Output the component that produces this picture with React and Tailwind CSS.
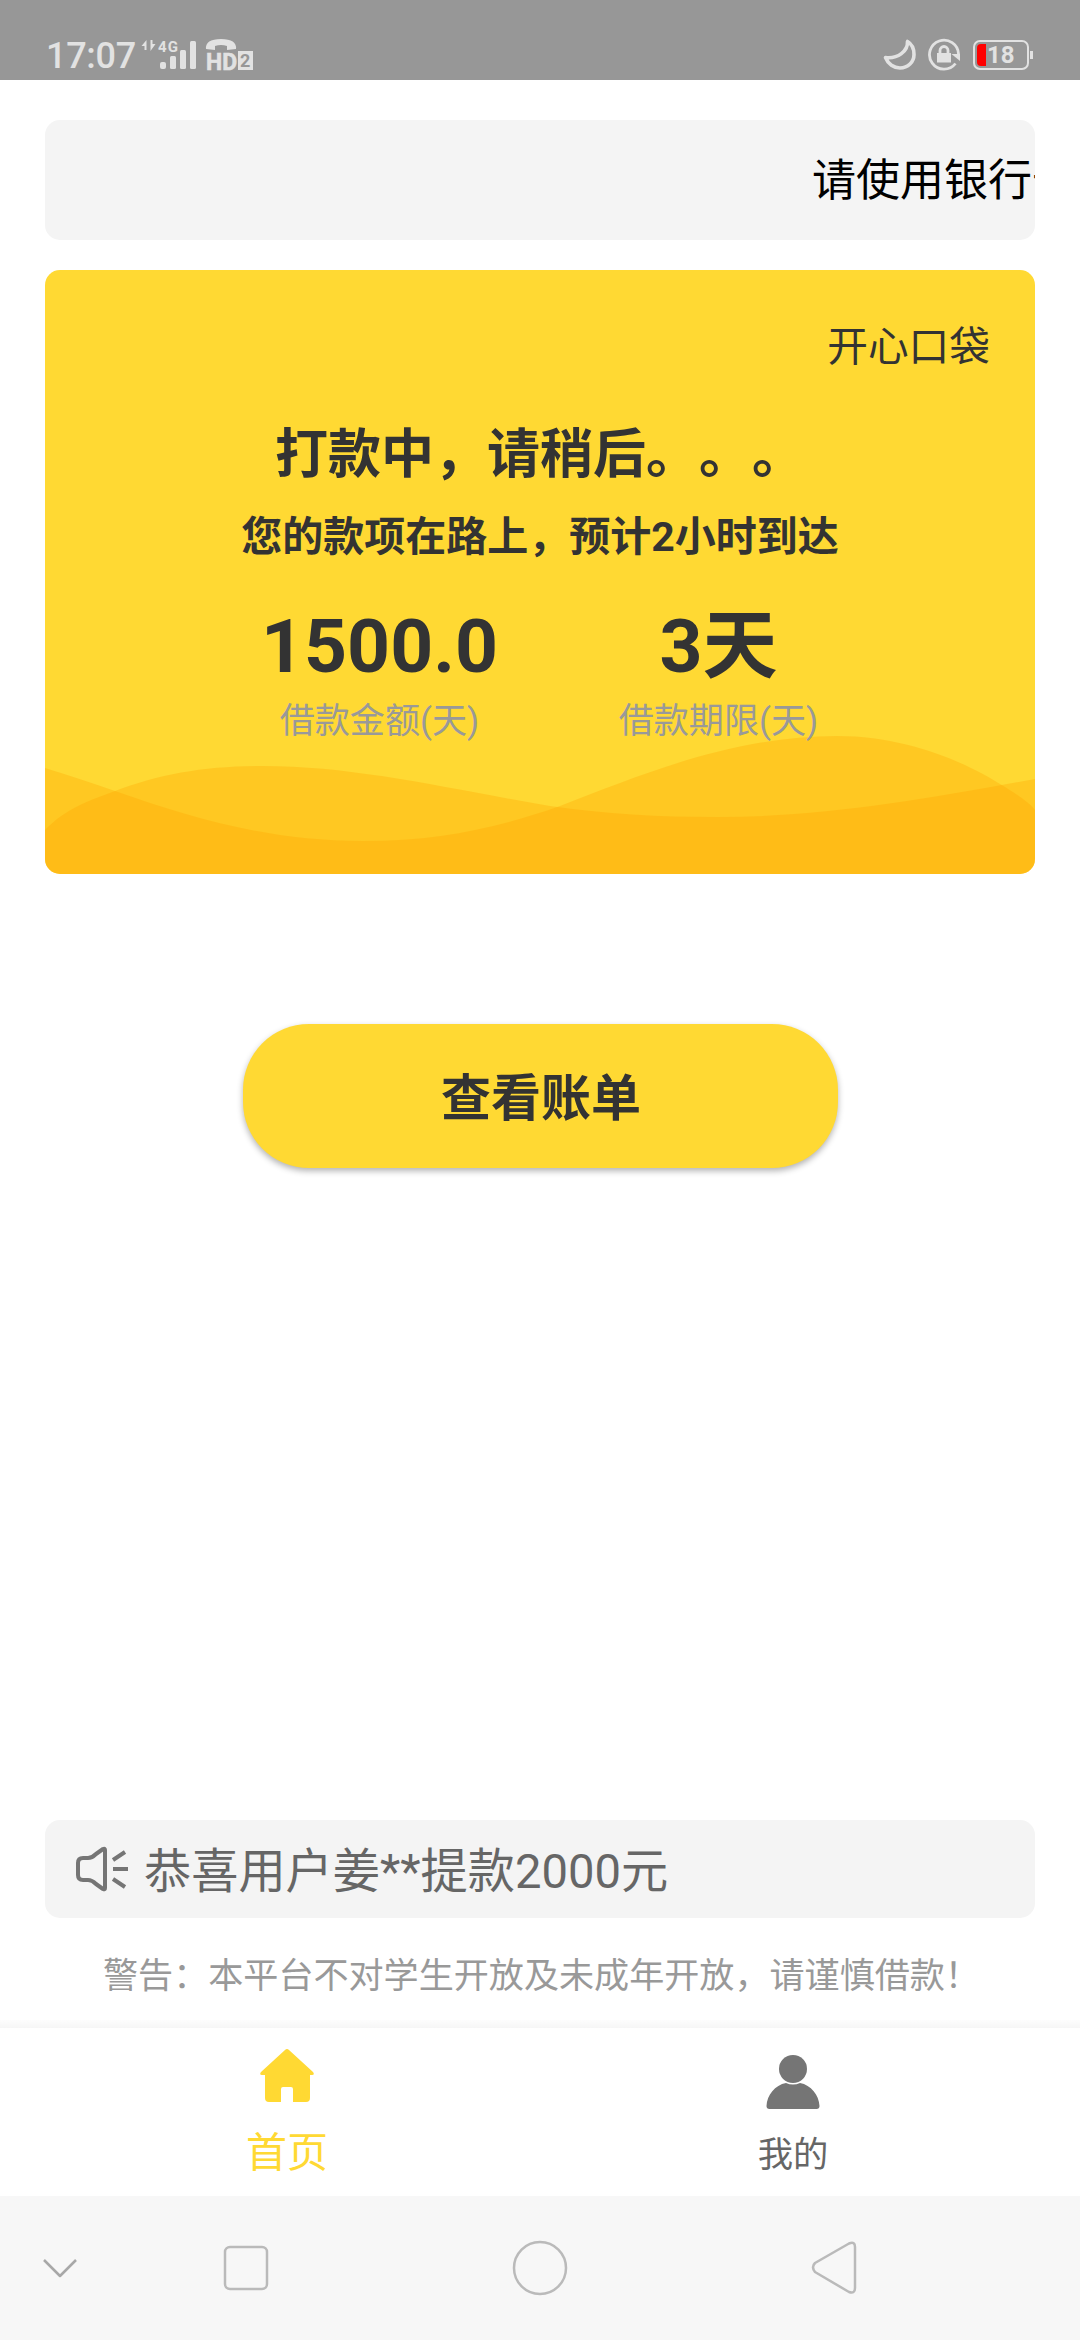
import { useState } from 'react';
import clsx from 'clsx';

const loanStats = [
  { label: '借款金额(天)', value: '1500.0' },
  { label: '借款期限(天)', value: '3天' },
];

const SignalIcons = () => (
  <svg className="overflow-visible" width="116" height="34" viewBox="140 37 116 34" fill="#e2e2e2" fontFamily="Roboto" fontWeight="700">
    {/* data arrows */}
    <path d="M141.5 46l5-6v10h-2v-4zM155.500 44l-5 7v-11h2v4z" />
    <text x="158" y="52" fontSize="15" textLength="20">4G</text>
    <rect x="160" y="62" width="6" height="7" rx="2" />
    <rect x="170" y="56" width="6" height="13" rx="1.5" />
    <rect x="180" y="50" width="6" height="19" rx="1.5" />
    <rect x="190" y="41" width="6" height="28" rx="1.5" />
    {/* handset */}
    <path d="M206 49q-1-10 15-10t15 10l-9 1v-4q-6-2-12 0v4z" />
    <text x="206" y="69.5" fontSize="24" textLength="31" lengthAdjust="spacingAndGlyphs" stroke="#e2e2e2" strokeWidth="0.6">HD</text>
    <rect x="238" y="51" width="15" height="19" />
    <text x="240" y="67" fontSize="18" fill="#979797">2</text>
  </svg>
);

const MoonIcon = () => (
  <svg width="34" height="34" viewBox="882 38 34 34" fill="none" stroke="#e2e2e2" strokeWidth="3.6" strokeLinejoin="round">
    <path d="M906.5 41.5C907 51 897 59 884.5 57.500C887 64 893 68 899 68C907 68 913 62 913 54.500C913 49 911 44 906.500 41.500z" />
  </svg>
);

const RotationLockIcon = () => (
  <svg width="34" height="34" viewBox="926 38 34 34" fill="none" stroke="#e2e2e2" strokeWidth="2.8">
    <path d="M954.500 63.500A14.500 14.500 0 1 1 957.500 54" />
    <path d="M950.500 54h8.500v7z" fill="#e2e2e2" stroke="none" />
    <rect x="936" y="53" width="14" height="9.500" fill="#e2e2e2" stroke="none" />
    <path d="M939 54v-3.500a4 4 0 0 1 8 0V54" />
  </svg>
);

const StatusBar = () => (
  <header className="flex h-20 items-start justify-between bg-[#979797] pr-[47px] pl-[46px] pt-[37px] text-[#e2e2e2]">
    <div className="flex">
      <span className="-mt-px w-[94px] text-[36px] leading-[40px] font-medium tracking-[-0.3px]">17:07</span>
      <SignalIcons />
    </div>
    <div className="flex pt-px">
      <MoonIcon />
      <div className="ml-2.5">
        <RotationLockIcon />
      </div>
      <div className="ml-3 mt-0.5 flex h-[30px] items-center">
        <div className="flex h-[30px] w-[56px] items-center rounded-[7px] border-2 border-[#e2e2e2] pl-0.5">
          <div className="h-[22px] w-[9px] rounded-l-[4px] bg-[#ff0000]" />
          <span className="ml-px text-[24px] leading-[24px] font-bold">18</span>
        </div>
        <div className="ml-px h-2 w-[3px] bg-[#e2e2e2]" />
      </div>
    </div>
  </header>
);

const CardWaves = () => (
  <svg className="absolute bottom-0 left-0" width="990" height="141" viewBox="0 0 990 141">
    <g fill="#ffa400" fillOpacity="0.32">
      <path d="M0 97C20 76 45 67 70 58C115 41 160 33 218 33C310 33 400 55 505 73C560 81 615 84 672 84C780 84 880 66 990 46V141H0z" />
      <path d="M0 35C25 43 48 50 70 58C150 86 225 108 318 108C395 108 455 94 515 73C600 40 690 3 792 3C865 3 925 32 955 51C970 60 985 70 990 77V141H0z" />
    </g>
  </svg>
);

const LoanCard = () => (
  <section className="relative mt-[30px] h-[604px] overflow-hidden rounded-[15px] bg-[#ffd933] text-[#333]">
    <CardWaves />
    <div className="relative flex flex-col items-center">
      <p className="mt-[47px] mr-[45px] self-end text-[40.7px] leading-[60px]">开心口袋</p>
      <h1 className="mt-[43px] text-[53px] leading-[70px] font-bold [text-spacing-trim:space-all]">打款中，请稍后。。。</h1>
      <p className="mt-[17px] text-[41px] leading-[60px] font-bold">您的款项在路上，预计2小时到达</p>
      <div className="mt-[34px] ml-[18px] flex gap-[105px]">
        {loanStats.map((stat) => (
          <div key={stat.label} className="flex w-[234px] flex-col items-center">
            <span className="text-[75px] leading-[90px] font-bold">{stat.value}</span>
            <span className="mt-1 text-[35.1px] leading-[52px] text-[#999]">{stat.label}</span>
          </div>
        ))}
      </div>
    </div>
  </section>
);

const SpeakerIcon = () => (
  <svg width="54" height="48" viewBox="75 1846 54 48" fill="none" stroke="#757575" strokeWidth="4" strokeLinejoin="round">
    <path d="M78 1864q0-5 5-5h5q4 0 8-4l7-5q2-1 2 1v38q0 2-2 1l-7-5q-4-4-8-4h-5q-5 0-5-5z" />
    <path d="M113 1861l12-8M113 1870h15M113 1880l12 8" />
  </svg>
);

const HomeIcon = () => (
  <svg width="54" height="54" viewBox="0 0 54 54" fill="#ffd933">
    <path d="M25 1q2-2 4 0l24 22q2 3-1 3h-2v23q0 4-4 4H33V40q0-2-2-2h-8q-2 0-2 2v13H9q-4 0-4-4V26H2q-3 0-1-3z" />
  </svg>
);

const PersonIcon = () => (
  <svg width="54" height="54" viewBox="0 0 54 54" fill="#757575">
    <ellipse cx="27" cy="14" rx="14" ry="14" />
    <path d="M20 28q7 3 14 0C45 30 53 40 53.500 51q0 3-3 3h-47q-3 0-3-3C1 40 9 30 20 28z" />
  </svg>
);

const tabs = [
  { id: 'home', label: '首页', icon: HomeIcon },
  { id: 'mine', label: '我的', icon: PersonIcon },
];

const TabBar = () => {
  const [active, setActive] = useState('home');

  return (
    <>
      <div className="h-[8px] bg-linear-to-b from-[#fdfdfd] to-[#f6f6f6]" />
      <nav className="flex h-[168px] px-[34px]">
        {tabs.map((tab) => {
          const Icon = tab.icon;
          const isActive = tab.id === active;
          return (
            <button
              key={tab.id}
              onClick={() => setActive(tab.id)}
              className={clsx(
                'flex flex-1 flex-col items-center',
                isActive ? 'pt-[21px] text-[41px] text-[#ffd933]' : 'pt-[27px] text-[35.3px] text-[#666]'
              )}
            >
              <Icon />
              <span className={clsx('leading-[60px]', isActive ? 'mt-[20px]' : 'mt-[16px]')}>{tab.label}</span>
            </button>
          );
        })}
      </nav>
    </>
  );
};

const SystemNav = () => (
  <footer className="h-[144px] bg-[#f7f7f7]">
    <svg width="1080" height="144" viewBox="0 2196 1080 144" fill="none" stroke="#bababa" strokeWidth="2.5" strokeLinejoin="round">
      <path d="M44 2260l16 16 16-16" stroke="#a8a8a8" />
      <rect x="225" y="2247" width="42" height="42" rx="5" />
      <circle cx="540" cy="2268" r="26" />
      <path d="M849 2243.500L815 2263q-4 4 0 9l34 20q6 2 6-4v-41q0-6-6-3.500z" />
    </svg>
  </footer>
);

export default function App() {
  return (
    <div className="flex h-[2340px] w-[1080px] flex-col bg-white font-['Roboto','Noto_Sans_CJK_SC',sans-serif]">
      <StatusBar />
      <main className="flex flex-1 flex-col px-[45px] pt-10">
        {/* Scrolling notice */}
        <div className="flex h-[120px] items-center overflow-hidden rounded-[15px] bg-[#f4f4f4] pt-0.5 pl-[767px] text-[44px] leading-[60px] whitespace-nowrap text-black">
          请使用银行卡
        </div>
        <LoanCard />
        <button className="mt-[150px] h-[144px] w-[595px] self-center rounded-[66px] bg-[#ffd933] pt-1.5 pl-0.5 text-[50px] font-bold text-[#333] shadow-[0_3px_6px_rgba(0,0,0,0.3)]">
          查看账单
        </button>
        <div className="mt-auto flex h-[98px] items-center rounded-[15px] bg-[#f4f4f4] pl-[30px] text-[47.2px] text-[#666]">
          <SpeakerIcon />
          <span className="mt-[6px] ml-[15px]">恭喜用户姜**提款2000元</span>
        </div>
        <p className="mt-[45px] mb-[31px] pl-[58px] text-[35.1px] leading-[26px] whitespace-nowrap text-[#999]">
          警告：本平台不对学生开放及未成年开放，请谨慎借款！
        </p>
      </main>
      <TabBar />
      <SystemNav />
    </div>
  );
}
